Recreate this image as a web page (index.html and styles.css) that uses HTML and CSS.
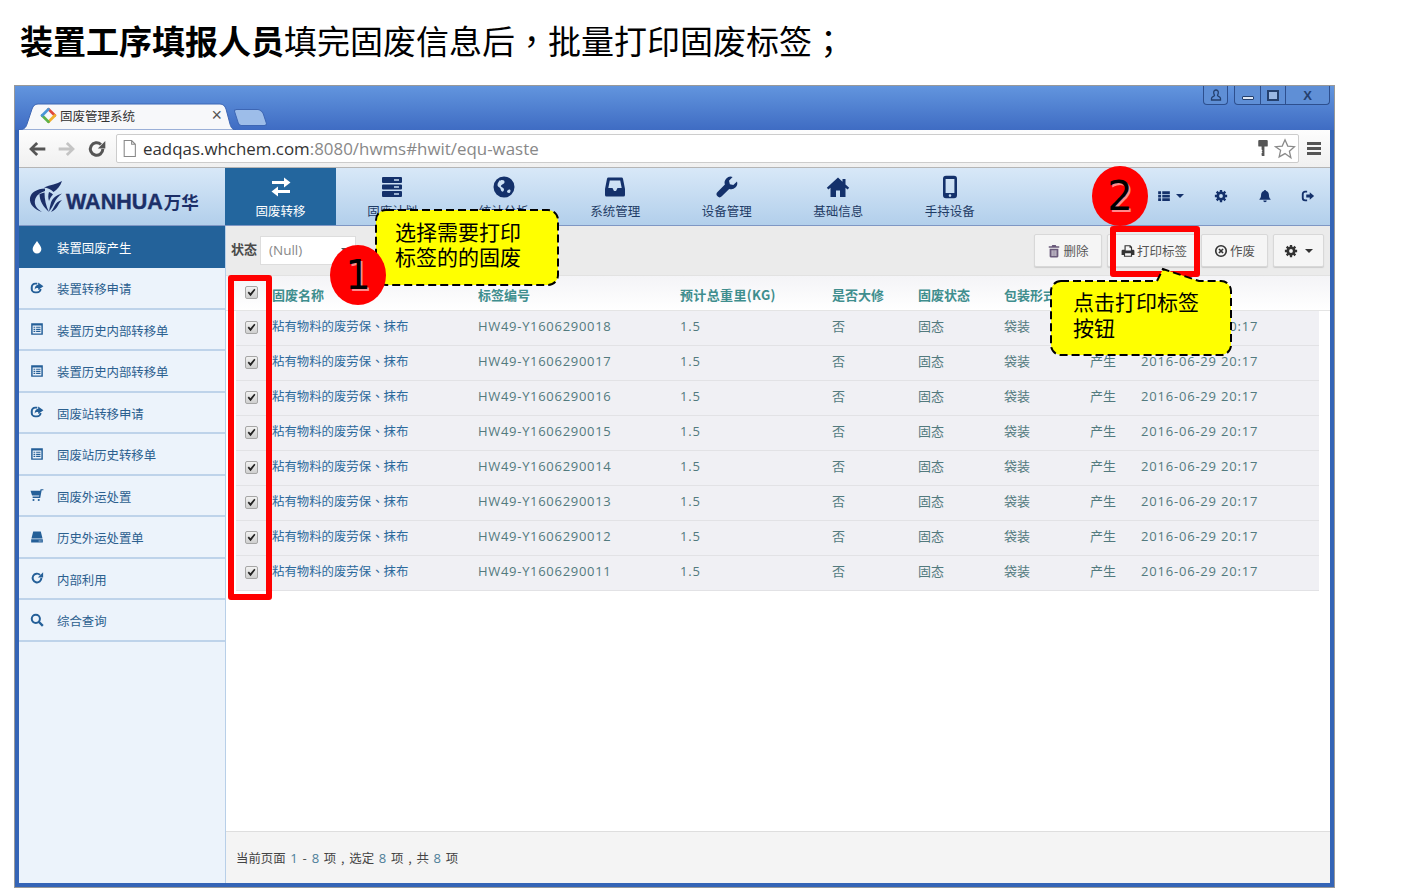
FILE: index.html
```html
<!DOCTYPE html>
<html lang="zh-CN">
<head>
<meta charset="utf-8">
<title>固废管理系统</title>
<link rel="stylesheet" href="styles.css">
</head>
<body>
<svg class="sprite" aria-hidden="true">
  <symbol id="i-exchange" viewBox="0 0 24 24"><path d="M3 6h12V2.500l6.500 5L15 12.500V9H3zM21 15H9v-3.500l-6.500 5L9 21.500V18h12z"/></symbol>
  <symbol id="i-server" viewBox="0 0 24 24"><path fill-rule="evenodd" d="M3 2h18a1 1 0 0 1 1 1v4a1 1 0 0 1-1 1H3a1 1 0 0 1-1-1V3a1 1 0 0 1 1-1zM14 4.300v1.400h5V4.300zM3 9.500h18a1 1 0 0 1 1 1v3a1 1 0 0 1-1 1H3a1 1 0 0 1-1-1v-3a1 1 0 0 1 1-1zM14 11.300v1.400h5v-1.400zM3 16h18a1 1 0 0 1 1 1v4a1 1 0 0 1-1 1H3a1 1 0 0 1-1-1v-4a1 1 0 0 1 1-1zM14 18.300v1.400h5v-1.400z"/></symbol>
  <symbol id="i-globe" viewBox="0 0 24 24"><path fill-rule="evenodd" d="M12 1.500a10.500 10.500 0 1 1 0 21 10.500 10.500 0 0 1 0-21zM8 5c-1 1-2.500 3-2.500 5 0 1.500 1.500 2 2.500 3 1 1 .5 2.500 2 3.500 1 .5 2-.5 2-2 0-1.500-2-2-3-3-.5-1 1-2 2-2.500 1.500-.5 2-2 1-3.500-1-.5-3-1-4 .5zM15 17c1 1 2 1.500 3 .5 1-1.500.5-3-.5-3-1.500 0-2.500 1-2.500 2.500z"/></symbol>
  <symbol id="i-inbox" viewBox="0 0 24 24"><path fill-rule="evenodd" d="M5.500 2.500h13a1.500 1.500 0 0 1 1.500 1.200L22 14v6a1.500 1.500 0 0 1-1.500 1.500h-17A1.500 1.500 0 0 1 2 20v-6L4 3.700a1.500 1.500 0 0 1 1.500-1.200zM6.800 5.500L5.300 13H9.500l1.500 3h2l1.500-3h4.200l-1.500-7.500z"/></symbol>
  <symbol id="i-wrench" viewBox="0 0 24 24"><path d="M22 6.500l-3.700 3.600-3.400-.9-.9-3.400L17.600 2A6 6 0 0 0 9.900 9.600L2.500 17a3 3 0 0 0 4.300 4.300l7.400-7.400A6 6 0 0 0 22 6.500z"/></symbol>
  <symbol id="i-home" viewBox="0 0 24 24"><path d="M12 2.500L.8 12.800l1.600 1.700L4.500 12.700V22H10v-6.500h4V22h5.500v-9.300l2.100 1.800 1.600-1.700L19.500 9.500V4h-3v2.800z"/></symbol>
  <symbol id="i-mobile" viewBox="0 0 24 24"><path fill-rule="evenodd" d="M8 .8h8a3 3 0 0 1 3 3v16.400a3 3 0 0 1-3 3H8a3 3 0 0 1-3-3V3.800a3 3 0 0 1 3-3zM7.600 4v14h8.800V4zM12 19.300a1.300 1.300 0 1 0 0 2.600 1.300 1.300 0 0 0 0-2.600z"/></symbol>
  <symbol id="i-thlist" viewBox="0 0 24 24"><path d="M2 4h5v4.500H2zM9 4h13v4.500H9zM2 10h5v4.500H2zM9 10h13v4.500H9zM2 16h5v4.500H2zM9 16h13v4.500H9z"/></symbol>
  <symbol id="i-cog" viewBox="0 0 24 24"><circle cx="12" cy="12" r="5.500" fill="none" stroke="currentColor" stroke-width="4.500"/><path d="M12 1.500v4M12 18.500v4M1.500 12h4M18.500 12h4M4.600 4.600l2.800 2.800M16.600 16.600l2.800 2.800M4.600 19.400l2.800-2.800M16.600 7.400l2.800-2.800" fill="none" stroke="currentColor" stroke-width="4"/></symbol>
  <symbol id="i-bell" viewBox="0 0 24 24"><path d="M12 1.500a2 2 0 0 1 2 2c3 1 4.800 3.500 4.800 7 0 3.200 1 5 2.700 6.800v1.200h-19v-1.200c1.700-1.800 2.700-3.600 2.700-6.800 0-3.500 1.800-6 4.800-7a2 2 0 0 1 2-2zM9 19.500h6a3 3 0 0 1-6 0z"/></symbol>
  <symbol id="i-signout" viewBox="0 0 24 24"><path d="M10.500 4.500H7a4 4 0 0 0-4 4v7a4 4 0 0 0 4 4h3.500" fill="none" stroke="currentColor" stroke-width="3.200"/><path d="M9 9.500h6V5.500l7.500 6.500-7.500 6.500v-4H9z"/></symbol>
  <symbol id="i-trash" viewBox="0 0 24 24"><path fill-rule="evenodd" d="M9 1.500h6l1 2.500h5v2.500H3V4h5zM4.500 8h15v13a2 2 0 0 1-2 2h-11a2 2 0 0 1-2-2zM8 10.500V20.500h1.500V10.500zM11.200 10.500V20.500h1.600V10.500zM14.500 10.500V20.500H16V10.500z"/></symbol>
  <symbol id="i-print" viewBox="0 0 24 24"><path fill-rule="evenodd" d="M6 2h10l3 3v5h2a2 2 0 0 1 2 2v7h-4v3H5v-3H1v-7a2 2 0 0 1 2-2h3zM8 4v7h9V6.500h-2.500V4zM7 16v4h10v-4z"/></symbol>
  <symbol id="i-xcircle" viewBox="0 0 24 24"><circle cx="12" cy="12" r="9" fill="none" stroke="currentColor" stroke-width="2.800"/><path d="M8.500 8.500l7 7M15.500 8.500l-7 7" fill="none" stroke="currentColor" stroke-width="2.800"/></symbol>
  <symbol id="i-tint" viewBox="0 0 24 24"><path d="M12 1.500c3.500 6 7.500 9 7.500 14a7.500 7.500 0 0 1-15 0c0-5 4-8 7.500-14z"/></symbol>
  <symbol id="i-share" viewBox="0 0 24 24"><path d="M12.500 4.500H9a6 6 0 0 0-6 6v3a6 6 0 0 0 6 6h3a6 6 0 0 0 6-6" fill="none" stroke="currentColor" stroke-width="3.400"/><path d="M14 2.500l9 6.500-9 6.500V12c-3 0-5 .5-6 3 0-4.500 2-8 6-8.500z"/></symbol>
  <symbol id="i-listalt" viewBox="0 0 24 24"><path fill-rule="evenodd" d="M2 2h20v20H2zM4.500 6v13.500h15V6zM6 8h3v2H6zM10.500 8H18v2h-7.500zM6 11.500h3v2H6zM10.500 11.500H18v2h-7.500zM6 15h3v2H6zM10.500 15H18v2h-7.500z"/></symbol>
  <symbol id="i-cart" viewBox="0 0 24 24"><path d="M1 4.500h16.500l.5-2.500h5v2h-3l-2.500 13H4.500v-2.500h11l.3-1.500H3.500z"/><circle cx="6" cy="20.500" r="1.800"/><circle cx="15" cy="20.500" r="1.800"/></symbol>
  <symbol id="i-hdd" viewBox="0 0 24 24"><path fill-rule="evenodd" d="M5.500 2.500h13l3 12H2.500zM2 16h20v5.500H2zM15 18v1.500h1.500V18zM18 18v1.500h1.500V18z"/></symbol>
  <symbol id="i-repeat" viewBox="0 0 24 24"><path d="M19.500 12a7.500 7.500 0 1 1-2.300-5.400" fill="none" stroke="currentColor" stroke-width="3.400"/><path d="M22.500 2v9h-9z"/></symbol>
  <symbol id="i-search" viewBox="0 0 24 24"><circle cx="10" cy="10" r="7" fill="none" stroke="currentColor" stroke-width="3.400"/><path d="M15 15l7 7" fill="none" stroke="currentColor" stroke-width="4"/></symbol>
  <symbol id="i-check" viewBox="0 0 12 12"><path d="M1.800 6.300L3.200 5l1.600 1.700L9 1.800l1.300 1.100L5 10z"/></symbol>
  <symbol id="i-left" viewBox="0 0 24 24"><path d="M11 3.500l2.400 2.400L8.800 10.300H22v3.400H8.800l4.600 4.400L11 20.500 2.500 12z"/></symbol>
  <symbol id="i-reload" viewBox="0 0 24 24"><path d="M19 12a7.500 7.500 0 1 1-2.300-5.400" fill="none" stroke="currentColor" stroke-width="3.600"/><path d="M22 2.500v9h-9z"/></symbol>
</svg>

<div class="page">
  <h1 class="headline"><b>装置工序填报人员</b>填完固废信息后<span class="p" lang="zh-TW">，</span>批量打印固废标签<span class="p" lang="zh-TW">；</span></h1>

  <div class="window">
    <div class="frame">
      <div class="tabstrip">
        <div class="tab">
          <svg class="tab-shape" viewBox="0 0 218 27"><path d="M0 27c5 0 8-2 9-6l5-15c1-3 3-5 6-5h182c3 0 5 2 6 5l4 15c1 4 3 6 6 6z" fill="#f7f8fa" stroke="#3d66b4"/></svg>
          <svg class="favicon" viewBox="0 0 16 16"><g fill="none" stroke-width="2.600" stroke-linecap="round"><path d="M8 2l6 6" stroke="#e0483a"/><path d="M14 8l-6 6" stroke="#efb02e"/><path d="M8 14L2 8" stroke="#5cb24a"/><path d="M2 8l6-6" stroke="#4a95d6"/></g></svg>
          <span class="tab-title">固废管理系统</span>
          <span class="tab-close">×</span>
        </div>
        <div class="newtab"></div>
        <div class="winctl">
          <div class="ctl-group"><span class="ctl ctl-user"><svg viewBox="0 0 12 12"><path d="M6 1a2.300 2.300 0 0 1 2.300 2.500C8.300 5 7.500 6 7.500 6.500c0 1 3 1 3 3V11h-9V9.500c0-2 3-2 3-3C4.500 6 3.700 5 3.700 3.500A2.300 2.300 0 0 1 6 1z" fill="none" stroke="#24406e" stroke-width="1.300"/></svg></span></div>
          <div class="ctl-group"><span class="ctl ctl-min"><i class="min-bar"></i></span><span class="ctl ctl-max"><i class="max-box"></i></span><span class="ctl ctl-close">X</span></div>
        </div>
      </div>

      <div class="chrome-bar">
        <svg class="chrome-ico c-dark"><use href="#i-left"/></svg>
        <svg class="chrome-ico c-light flip"><use href="#i-left"/></svg>
        <svg class="chrome-ico c-dark"><use href="#i-reload"/></svg>
        <div class="omnibox">
          <svg class="page-ico" viewBox="0 0 12 16"><path d="M1 .5h7l3.500 3.500v11.500H1zM8 .5V4h3.500" fill="#fff" stroke="#888"/></svg>
          <span class="url"><span class="url-host">eadqas.whchem.com</span>:8080/hwms#hwit/equ-waste</span>
          <svg class="key-ico" viewBox="0 0 12 20"><path d="M2 1h8a1 1 0 0 1 1 1v5a1 1 0 0 1-1 1H7.500v10H5l-.5-1V15l1-1-1-1 1-1-1-1V8H2a1 1 0 0 1-1-1V2a1 1 0 0 1 1-1z" fill="#555"/></svg>
          <svg class="star-ico" viewBox="0 0 24 24"><path d="M12 2l3 6.800 7.300.7-5.500 4.900 1.600 7.200L12 17l-6.400 3.600 1.600-7.200L1.700 9.500 9 8.800z" fill="#fff" stroke="#8a8a8a" stroke-width="1.400"/></svg>
        </div>
        <div class="menu-ico"><i></i><i></i><i></i></div>
      </div>

      <div class="app">
        <header class="app-head">
          <div class="logo">
            <svg class="logo-mark" viewBox="0 0 34 32"><path d="M16 7.500C8 8 2 11 1 17c-1 6.500 5 11.500 12 14-5-3-8-7-7-12 1-4.500 5-7.500 10-9z" fill="#1c2f68"/><path d="M33 0c-5 3-12 4-18 6.500 4 .5 7 2 9.500 4.500C28 8.500 31.500 5 33 0z" fill="#1c2f68"/><path d="M10.500 13c0 7 4 13 9.500 18-3-6-4.500-12-4.500-19.500zM33 12.500c-6 1.500-9.500 5-11 9-1 3-1.500 6-2 9 2.500-3 4-6 5.500-9 1.500-3.500 4-6.500 7.500-9zM33 19c-4 1-6 3-7.500 6-1 2-2 4-3.500 6 3.500-1.500 5.500-3.500 7-6.500 1-2 2.500-4 4-5.500zM20 11c-1 3-1 6 0 9 1-3 2.500-5 4-6.500-1-1-2.500-2-4-2.500z" fill="#1c2f68"/></svg>
            <span class="logo-text">WANHUA<span class="logo-cn">万华</span></span>
          </div>
          <nav class="nav">
            <a class="nav-item is-active"><svg class="nav-ico"><use href="#i-exchange"/></svg><span>固废转移</span></a>
            <a class="nav-item"><svg class="nav-ico"><use href="#i-server"/></svg><span>固废计划</span></a>
            <a class="nav-item"><svg class="nav-ico"><use href="#i-globe"/></svg><span>统计分析</span></a>
            <a class="nav-item"><svg class="nav-ico"><use href="#i-inbox"/></svg><span>系统管理</span></a>
            <a class="nav-item"><svg class="nav-ico"><use href="#i-wrench"/></svg><span>设备管理</span></a>
            <a class="nav-item"><svg class="nav-ico"><use href="#i-home"/></svg><span>基础信息</span></a>
            <a class="nav-item"><svg class="nav-ico"><use href="#i-mobile"/></svg><span>手持设备</span></a>
          </nav>
          <div class="head-tools">
            <span class="tool tool-list"><svg class="tool-ico"><use href="#i-thlist"/></svg><i class="caret"></i></span>
            <span class="tool tool-cog"><svg class="tool-ico"><use href="#i-cog"/></svg></span>
            <span class="tool tool-bell"><svg class="tool-ico"><use href="#i-bell"/></svg></span>
            <span class="tool tool-out"><svg class="tool-ico"><use href="#i-signout"/></svg></span>
          </div>
        </header>

        <div class="app-body">
          <aside class="side">
            <a class="side-item is-active"><svg class="side-ico"><use href="#i-tint"/></svg>装置固废产生</a>
            <a class="side-item"><svg class="side-ico"><use href="#i-share"/></svg>装置转移申请</a>
            <a class="side-item"><svg class="side-ico"><use href="#i-listalt"/></svg>装置历史内部转移单</a>
            <a class="side-item"><svg class="side-ico"><use href="#i-listalt"/></svg>装置历史内部转移单</a>
            <a class="side-item"><svg class="side-ico"><use href="#i-share"/></svg>固废站转移申请</a>
            <a class="side-item"><svg class="side-ico"><use href="#i-listalt"/></svg>固废站历史转移单</a>
            <a class="side-item"><svg class="side-ico"><use href="#i-cart"/></svg>固废外运处置</a>
            <a class="side-item"><svg class="side-ico"><use href="#i-hdd"/></svg>历史外运处置单</a>
            <a class="side-item"><svg class="side-ico"><use href="#i-repeat"/></svg>内部利用</a>
            <a class="side-item"><svg class="side-ico"><use href="#i-search"/></svg>综合查询</a>
          </aside>

          <main class="main">
            <div class="filter-bar">
              <span class="filter-label">状态</span>
              <div class="select">(Null)<i class="caret caret-grey"></i></div>
              <div class="actions">
                <button class="btn btn-del"><svg class="btn-ico ico-trash"><use href="#i-trash"/></svg>删除</button>
                <button class="btn btn-print"><svg class="btn-ico"><use href="#i-print"/></svg>打印标签</button>
                <button class="btn btn-void"><svg class="btn-ico"><use href="#i-xcircle"/></svg>作废</button>
                <button class="btn btn-gear"><svg class="btn-ico"><use href="#i-cog"/></svg><i class="caret"></i></button>
              </div>
            </div>

            <div class="grid-head">
              <div class="row row-head">
                <span class="cb"><svg><use href="#i-check"/></svg></span>
                <span>固废名称</span><span>标签编号</span><span class="num-head">预计总重里(KG)</span><span>是否大修</span><span>固废状态</span><span>包装形式</span><span>状态</span><span>产生时间</span>
              </div>
            </div>

            <div class="grid-body">
              <div class="row"><span class="cb"><svg><use href="#i-check"/></svg></span><span class="name">粘有物料的废劳保<span class="p" lang="zh-TW">、</span>抹布</span><span class="code">HW49-Y1606290018</span><span class="num">1.5</span><span>否</span><span>固态</span><span>袋装</span><span>产生</span><span class="num">2016-06-29 20:17</span></div>
              <div class="row"><span class="cb"><svg><use href="#i-check"/></svg></span><span class="name">粘有物料的废劳保<span class="p" lang="zh-TW">、</span>抹布</span><span class="code">HW49-Y1606290017</span><span class="num">1.5</span><span>否</span><span>固态</span><span>袋装</span><span>产生</span><span class="num">2016-06-29 20:17</span></div>
              <div class="row"><span class="cb"><svg><use href="#i-check"/></svg></span><span class="name">粘有物料的废劳保<span class="p" lang="zh-TW">、</span>抹布</span><span class="code">HW49-Y1606290016</span><span class="num">1.5</span><span>否</span><span>固态</span><span>袋装</span><span>产生</span><span class="num">2016-06-29 20:17</span></div>
              <div class="row"><span class="cb"><svg><use href="#i-check"/></svg></span><span class="name">粘有物料的废劳保<span class="p" lang="zh-TW">、</span>抹布</span><span class="code">HW49-Y1606290015</span><span class="num">1.5</span><span>否</span><span>固态</span><span>袋装</span><span>产生</span><span class="num">2016-06-29 20:17</span></div>
              <div class="row"><span class="cb"><svg><use href="#i-check"/></svg></span><span class="name">粘有物料的废劳保<span class="p" lang="zh-TW">、</span>抹布</span><span class="code">HW49-Y1606290014</span><span class="num">1.5</span><span>否</span><span>固态</span><span>袋装</span><span>产生</span><span class="num">2016-06-29 20:17</span></div>
              <div class="row"><span class="cb"><svg><use href="#i-check"/></svg></span><span class="name">粘有物料的废劳保<span class="p" lang="zh-TW">、</span>抹布</span><span class="code">HW49-Y1606290013</span><span class="num">1.5</span><span>否</span><span>固态</span><span>袋装</span><span>产生</span><span class="num">2016-06-29 20:17</span></div>
              <div class="row"><span class="cb"><svg><use href="#i-check"/></svg></span><span class="name">粘有物料的废劳保<span class="p" lang="zh-TW">、</span>抹布</span><span class="code">HW49-Y1606290012</span><span class="num">1.5</span><span>否</span><span>固态</span><span>袋装</span><span>产生</span><span class="num">2016-06-29 20:17</span></div>
              <div class="row"><span class="cb"><svg><use href="#i-check"/></svg></span><span class="name">粘有物料的废劳保<span class="p" lang="zh-TW">、</span>抹布</span><span class="code">HW49-Y1606290011</span><span class="num">1.5</span><span>否</span><span>固态</span><span>袋装</span><span>产生</span><span class="num">2016-06-29 20:17</span></div>
            </div>

            <footer class="pager">当前页面 <b>1</b> - <b>8</b> 项 , 选定 <b>8</b> 项 , 共 <b>8</b> 项</footer>
          </main>
        </div>
      </div>
    </div>
  </div>

  <div class="mark-box mark-checks"></div>
  <div class="mark-box mark-print"></div>
  <div class="callout callout-one">
    <svg class="callout-shape" viewBox="0 0 184 77"><rect x="1" y="1" width="182" height="75" rx="10" fill="#ffff00" stroke="#000" stroke-width="2" stroke-dasharray="8 4"/></svg>
    <span class="callout-text">选择需要打印<br>标签的的固废</span>
  </div>
  <div class="callout callout-two">
    <svg class="callout-shape" viewBox="0 0 184 90"><path d="M12 14H108L114 2L150 14H172a10 10 0 0 1 10 10V78a10 10 0 0 1-10 10H12a10 10 0 0 1-10-10V24a10 10 0 0 1 10-10z" fill="#ffff00" stroke="#000" stroke-width="2" stroke-dasharray="8 4"/></svg>
    <span class="callout-text">点击打印标签<br>按钮</span>
  </div>
  <div class="badge badge-one">1</div>
  <div class="badge badge-two">2</div>
</div>
</body>
</html>
```

FILE: styles.css
```css
* { box-sizing: border-box; }
html, body { margin: 0; padding: 0; background: #fff; }
body { width: 1405px; height: 888px; overflow: hidden; font-family: "Noto Sans CJK SC", "Liberation Sans", sans-serif; }
svg { fill: currentColor; }
.sprite { display: none; }
i { font-style: normal; display: block; }
a { display: flex; }
.p { font-family: "Noto Sans CJK TC", sans-serif; font-weight: 400; }

.page { position: relative; width: 1405px; height: 888px; }
.headline { margin: 0; height: 85px; padding: 15px 0 0 20px; font-size: 33px; line-height: 50px; font-weight: 400; color: #000; }
.headline b { font-weight: 700; }

.window { margin-left: 14px; width: 1321px; height: 803px; border: 1px solid #999; }
.frame { height: 100%; display: flex; flex-direction: column; border: 4px solid #3464b6; border-top: 0; }

/* title bar */
.tabstrip { position: relative; flex: 0 0 44px; margin: 0 -4px; background: linear-gradient(#6295de, #3f6cc3); display: flex; align-items: flex-end; padding-left: 3px; }
.tab { position: relative; width: 218px; height: 27px; display: flex; align-items: center; padding: 0 14px 3px 22px; }
.tab-shape { position: absolute; left: 0; top: 0; width: 218px; height: 27px; }
.favicon { position: relative; width: 17px; height: 17px; flex: none; }
.tab-title { position: relative; margin-left: 3px; font-size: 12.500px; color: #333; flex: 1; }
.tab-close { position: relative; font-size: 18px; line-height: 1; color: #555; font-family: "Liberation Sans", sans-serif; }
.newtab { width: 29px; height: 17px; margin: 0 0 4px 0; background: #9dbde9; border: 1px solid #3d66b4; border-radius: 3px 5px 3px 3px; transform: skewX(18deg); }
.winctl { position: absolute; right: 4px; top: 0; display: flex; gap: 6px; }
.ctl-group { display: flex; height: 19px; background: #5f8fd6; border: 1px solid #2d4f8e; border-top: 0; border-radius: 0 0 4px 4px; }
.ctl { height: 100%; display: flex; align-items: center; justify-content: center; color: #24406e; }
.ctl + .ctl { border-left: 1px solid #2d4f8e; }
.ctl-user { width: 23px; }
.ctl-user svg { width: 12px; height: 12px; }
.ctl-min { width: 25px; }
.min-bar { width: 12px; height: 4px; margin-top: 5px; border: 1px solid #24406e; background: #dfe8f5; border-radius: 1px; }
.ctl-max { width: 25px; }
.max-box { width: 12px; height: 11px; border: 2px solid #24406e; background: #9ab8e4; }
.ctl-close { width: 44px; font: 700 13px "Liberation Sans", sans-serif; }

/* browser toolbar */
.chrome-bar { flex: 0 0 38px; display: flex; align-items: center; padding: 0 9px 0 8px; background: linear-gradient(#fdfdfd, #f0f0f0); border-bottom: 1px solid #b5b5b5; }
.chrome-ico { width: 20px; height: 20px; flex: none; margin-right: 10px; }
.c-dark { color: #555; }
.c-light { color: #c4c4c4; }
.flip { transform: scaleX(-1); }
.omnibox { flex: 1; height: 29px; display: flex; align-items: center; margin-left: -1px; background: #fff; border: 1px solid #ccc; border-radius: 2px; padding: 0 2px 0 6px; }
.page-ico { width: 13px; height: 17px; flex: none; }
.url { flex: 1; margin-left: 7px; font: 16.900px "Open Sans", sans-serif; color: #888; }
.url-host { color: #333; }
.key-ico { width: 12px; height: 19px; margin-right: 5px; }
.star-ico { width: 22px; height: 22px; }
.menu-ico { width: 14px; margin-left: 8px; display: flex; flex-direction: column; gap: 2px; }
.menu-ico i { height: 3px; background: #555; }

/* app */
.app { flex: 1; display: flex; flex-direction: column; min-height: 0; }
.app-head { flex: 0 0 58px; display: flex; background: linear-gradient(#d8e8f8, #b2cfeb); border-bottom: 1px solid #7f97c4; }
.logo { width: 206px; flex: none; display: flex; align-items: center; padding: 4px 0 0 10px; color: #1c2f68; }
.logo-mark { width: 34px; height: 32px; flex: none; margin-top: -4px; }
.logo-text { margin-left: 3px; padding-top: 6px; font: 700 21.500px "Liberation Sans", sans-serif; -webkit-text-stroke: .4px #1c2f68; white-space: nowrap; }
.logo-cn { font: 700 17.500px "Noto Sans CJK SC", sans-serif; margin-left: 1px; -webkit-text-stroke: 0; }
.nav { display: flex; }
.nav-item { width: 111.500px; flex-direction: column; align-items: center; padding-top: 7px; font-size: 12.500px; line-height: 17px; color: #1f3c66; }
.nav-item.is-active { width: 111px; margin-right: .5px; background: #23669e; color: #fff; }
.nav-ico { width: 24px; height: 24px; margin-bottom: 3px; color: #14316b; }
.is-active .nav-ico { color: #fff; }
.head-tools { flex: 1; display: flex; align-items: center; padding-bottom: 2px; color: #14316b; }
.tool { display: flex; align-items: center; }
.tool-ico { width: 14px; height: 14px; }
.tool-list { margin-left: 151px; }
.tool-cog { margin-left: 30px; }
.tool-bell { margin-left: 30px; }
.tool-out { margin-left: 29px; }
.caret { width: 0; height: 0; margin-left: 5px; border: 4px solid transparent; border-top-color: currentColor; border-bottom: 0; }
.caret-grey { color: #555; margin-left: auto; }

.app-body { flex: 1; display: flex; min-height: 0; }
.side { width: 207px; flex: none; background: #ecf3fb; border-right: 1px solid #b8cfe8; }
.side-item { height: 41.500px; align-items: center; padding: 3px 0 0 11px; font-size: 12.400px; color: #2b608f; border-bottom: 2px solid #bed3ea; }
.side-item.is-active { height: 42px; padding-top: 2px; background: #23629a; color: #fff; border-bottom: 0; }
.side-ico { width: 14px; height: 14px; margin-right: 13px; margin-top: -3px; flex: none; color: #245f98; }
.is-active .side-ico { color: #fff; }

.main { flex: 1; display: flex; flex-direction: column; min-width: 0; background: #fff; }
.filter-bar { flex: 0 0 50px; display: flex; align-items: center; padding: 0 6px 0 5px; background: #ebebeb; border-bottom: 1px solid #e2e2e2; }
.filter-label { font-size: 13px; font-weight: 700; color: #4a4a4a; margin-right: 3px; padding-bottom: 4px; }
.select { width: 96px; height: 29px; display: flex; align-items: center; padding: 0 6px 2px 8px; background: #fff; border: 1px solid #ddd; font: 13.500px "Open Sans", sans-serif; color: #888; }
.actions { margin-left: auto; display: flex; gap: 5px; }
.btn { height: 33px; display: flex; align-items: center; justify-content: center; padding: 0; border: 1px solid #d8d8d8; border-radius: 2px; background: #f5f5f5; box-shadow: 0 1px 1px #ccc; font: 12.500px "Noto Sans CJK SC", sans-serif; color: #555; }
.btn-ico { width: 14px; height: 14px; margin-right: 2px; color: #333; }
.ico-trash { color: #6a5a7a; }
.btn-del { width: 68px; }
.btn-print { width: 89px; padding-left: 5px; }
.btn-void { width: 67px; }
.btn-gear { width: 51px; color: #333; }

.grid-head { flex: 0 0 35px; padding-left: 10px; background: linear-gradient(#f4f4f7, #fff); border-bottom: 1px solid #e4e4e4; }
.row { display: grid; grid-template-columns: 36px 206px 202px 152px 86px 86px 86px 51px 1fr; align-items: center; height: 35px; font-size: 13px; color: #527a7e; }
.row-head { height: 34px; font-size: 13px; font-weight: 700; color: #3f8e8e; padding-top: 2px; }
.row-head .cb { margin-bottom: 4px; }
.num-head { letter-spacing: .35px; }
.grid-body { padding: 0 0 0 10px; width: 1093px; }
.grid-body .row { background: #f0f0f4; border-bottom: 1px solid #e2e2e5; padding-bottom: 5px; }
.grid-body .cb { margin-top: 4px; }
.name { color: #2c6a9c; font-size: 12.400px; }
.code, .num { font-family: "Open Sans", sans-serif; font-size: 13px; }
.code { letter-spacing: .7px; }
.num { letter-spacing: .8px; white-space: nowrap; }
.cb { width: 13px; height: 13px; margin-left: 9px; display: flex; align-items: center; justify-content: center; background: linear-gradient(#f2f2f2, #cfcfcf); border: 1px solid #a6a6a6; border-radius: 2px; color: #222; }
.cb svg { width: 11px; height: 11px; }

.pager { margin-top: auto; height: 52px; padding-left: 10px; background: #f4f4f4; border-top: 1px solid #dedede; font-size: 12.400px; line-height: 52px; color: #444; word-spacing: 2px; }
.pager b { font: 13px "Open Sans", sans-serif; color: #4d7f99; }

/* annotations */
.mark-box { position: absolute; border: 6px solid #ff0000; border-radius: 3px; }
.mark-checks { left: 228px; top: 275px; width: 44px; height: 325px; }
.mark-print { left: 1110px; top: 226px; width: 90px; height: 51px; }
.callout { position: absolute; width: 184px; color: #000; }
.callout-one { left: 375px; top: 209px; height: 77px; }
.callout-two { left: 1049px; top: 267px; height: 90px; }
.callout-shape { position: absolute; left: 0; top: 0; width: 100%; height: 100%; }
.callout-text { position: absolute; font-size: 21px; line-height: 25px; white-space: nowrap; }
.callout-one .callout-text { left: 20px; top: 10px; }
.callout-two .callout-text { left: 24px; top: 21px; line-height: 26px; }
.badge { position: absolute; width: 56px; height: 60px; display: flex; align-items: center; justify-content: center; border-radius: 50%; background: #ff0000; color: #000; font: 40px "DejaVu Sans", sans-serif; text-shadow: 2px 2px 0 #ff8a8a; }
.badge-one { left: 330px; top: 245px; }
.badge-two { left: 1092px; top: 166px; }
```
